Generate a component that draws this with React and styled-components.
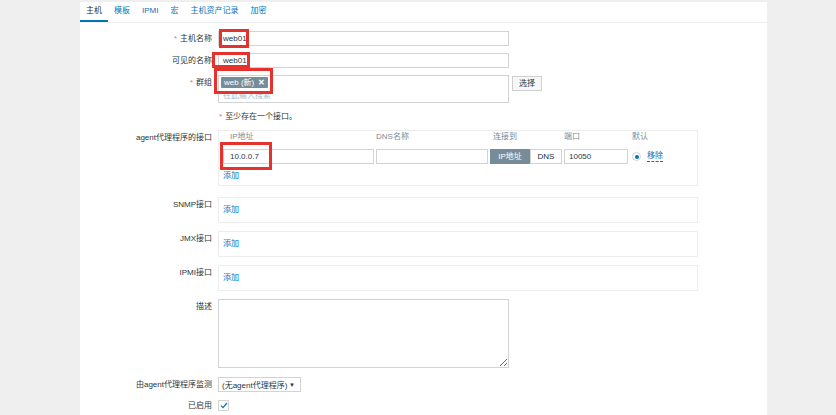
import React from 'react';
import styled, { createGlobalStyle } from 'styled-components';

const GlobalStyle = createGlobalStyle`
  body {
    margin: 0;
    background: #efefef;
    font-family: "Liberation Sans", "Noto Sans CJK SC", Arial, sans-serif;
    font-size: 8px;
    color: #2a363c;
  }
`;

const Page = styled.div`
  width: 836px;
  height: 415px;
  padding-top: 2px;
  box-sizing: border-box;
  overflow: hidden;
`;

const Panel = styled.div`
  margin-left: 80px;
  width: 687px;
  height: 413px;
  background: #fff;
`;

const TabBar = styled.div`
  display: flex;
  height: 20px;
  border-bottom: 1px solid #ebeef0;
`;

const Tab = styled.div`
  padding: 0 6px;
  line-height: 18px;
  border-bottom: 2px solid ${p => (p.$active ? '#0275b8' : 'transparent')};
  color: ${p => (p.$active ? '#1f2c33' : '#0275b8')};
`;

const Form = styled.div`
  display: flex;
  flex-direction: column;
`;

const Row = styled.div`
  display: grid;
  grid-template-columns: 132px auto;
  column-gap: 6px;
  align-items: ${p => (p.$center ? 'center' : 'start')};
  margin-top: ${p => p.$mt}px;
`;

const Label = styled.div`
  text-align: right;
  line-height: ${p => (p.$lh ? p.$lh : 15)}px;
  white-space: nowrap;
`;

const Star = styled.span`
  color: #e47070;
  margin-right: 3px;
`;

const Field = styled.div`
  display: flex;
  align-items: flex-start;
  gap: 3px;
`;

const Input = styled.div`
  position: relative;
  box-sizing: border-box;
  width: ${p => p.$w}px;
  height: 15px;
  border: 1px solid #d3d3d3;
  padding-left: ${p => (p.$pl != null ? p.$pl : 4)}px;
  line-height: 13px;
  background: #fff;
  white-space: nowrap;
`;

const Mark = styled.div`
  position: absolute;
  box-sizing: border-box;
  border: 3px solid #e5322d;
  left: ${p => p.$l}px;
  top: ${p => p.$t}px;
  width: ${p => p.$w}px;
  height: ${p => p.$h}px;
  pointer-events: none;
  z-index: 2;
`;

const MultiSelect = styled.div`
  position: relative;
  box-sizing: border-box;
  width: 291px;
  height: 28px;
  border: 1px solid #d3d3d3;
  padding: 1px 2px;
`;

const TagChip = styled.span`
  display: inline-flex;
  align-items: center;
  gap: 4px;
  height: 11px;
  padding: 0 3px;
  background: #768d99;
  color: #fff;
  border-radius: 1px;
  line-height: 11px;
`;

const TagX = styled.span`
  font-weight: bold;
  font-size: 8px;
`;

const Placeholder = styled.div`
  color: #acbbc2;
  line-height: 11px;
  margin-top: 2px;
  padding-left: 2px;
`;

const Button = styled.div`
  box-sizing: border-box;
  height: 15px;
  padding: 0 6px;
  border: 1px solid #cfcfcf;
  background: #f7f7f7;
  line-height: 13px;
  margin-top: 1px;
`;

const Note = styled.div`
  line-height: 11px;
  padding-left: 1px;
`;

const IfaceBox = styled.div`
  box-sizing: border-box;
  width: 480px;
  border: 1px solid #ededed;
  padding: ${p => (p.$empty ? '0 4px' : '1px 4px 4px')};
  height: ${p => (p.$empty ? '26px' : 'auto')};
  display: flex;
  flex-direction: column;
  justify-content: center;
`;

const IfaceGrid = styled.div`
  display: grid;
  grid-template-columns: 151px 112px 72px 64px auto;
  column-gap: 2px;
  row-gap: 7px;
  align-items: center;
`;

const ColHead = styled.div`
  line-height: 10px;
  color: #768d99;
  padding-left: ${p => p.$pl || 0}px;
`;

const Toggle = styled.div`
  display: flex;
  height: 15px;
`;

const ToggleBtn = styled.div`
  box-sizing: border-box;
  width: ${p => p.$w}px;
  height: 15px;
  line-height: 13px;
  text-align: center;
  border: 1px solid ${p => (p.$on ? '#768d99' : '#d3d3d3')};
  background: ${p => (p.$on ? '#768d99' : '#fff')};
  color: ${p => (p.$on ? '#fff' : '#1f2c33')};
`;

const DefaultCell = styled.div`
  display: flex;
  align-items: center;
  gap: 6px;
  padding-left: 2px;
`;

const Radio = styled.span`
  box-sizing: border-box;
  width: 9px;
  height: 9px;
  border-radius: 50%;
  border: 1px solid #d3d3d3;
  display: flex;
  align-items: center;
  justify-content: center;
  &::after {
    content: '';
    width: 4px;
    height: 4px;
    border-radius: 50%;
    background: #0275b8;
  }
`;

const Link = styled.span`
  color: #0275b8;
  line-height: 10px;
  border-bottom: ${p => (p.$dashed ? '1px dashed #0275b8' : 'none')};
`;

const AddLine = styled.div`
  line-height: 10px;
  margin-top: ${p => p.$mt || 0}px;
`;

const TextArea = styled.textarea`
  box-sizing: border-box;
  width: 291px;
  height: 69px;
  border: 1px solid #d3d3d3;
  margin: 0;
  padding: 2px;
  font: inherit;
`;

const Select = styled.div`
  box-sizing: border-box;
  width: 83px;
  height: 15px;
  border: 1px solid #d3d3d3;
  padding: 0 5px 0 3px;
  display: flex;
  justify-content: space-between;
  align-items: center;
  white-space: nowrap;
`;

const Arrow = styled.span`
  font-size: 6px;
`;

const Check = styled.div`
  box-sizing: border-box;
  width: 11px;
  height: 11px;
  border: 1px solid #d3d3d3;
  display: flex;
  align-items: center;
  justify-content: center;
`;

const tabs = ['主机', '模板', 'IPMI', '宏', '主机资产记录', '加密'];

const EmptyInterface = ({ label, mt }) => (
  <Row $mt={mt}>
    <Label>{label}</Label>
    <IfaceBox $empty>
      <AddLine>
        <Link>添加</Link>
      </AddLine>
    </IfaceBox>
  </Row>
);

export default function App() {
  return (
    <Page>
      <GlobalStyle />
      <Panel>
        <TabBar>
          {tabs.map((t, i) => (
            <Tab key={t} $active={i === 0}>{t}</Tab>
          ))}
        </TabBar>
        <Form>
          <Row $mt={8}>
            <Label><Star>*</Star>主机名称</Label>
            <Input $w={291} $pl={4}>
              web01
              <Mark $l={0} $t={-3} $w={30} $h={19} />
            </Input>
          </Row>
          <Row $mt={7}>
            <Label>可见的名称</Label>
            <Input $w={291} $pl={4}>
              web01
              <Mark $l={-7} $t={-2} $w={38} $h={16} />
            </Input>
          </Row>
          <Row $mt={7}>
            <Label><Star>*</Star>群组</Label>
            <Field>
              <MultiSelect>
                <TagChip>web (新) <TagX>✕</TagX></TagChip>
                <Placeholder>在此输入搜索</Placeholder>
                <Mark $l={-5} $t={-8} $w={59} $h={26} />
              </MultiSelect>
              <Button>选择</Button>
            </Field>
          </Row>
          <Row $mt={8}>
            <div />
            <Note><Star>*</Star>至少存在一个接口。</Note>
          </Row>
          <Row $mt={8}>
            <Label>agent代理程序的接口</Label>
            <IfaceBox>
              <IfaceGrid>
                <ColHead $pl={7}>IP地址</ColHead>
                <ColHead>DNS名称</ColHead>
                <ColHead $pl={3}>连接到</ColHead>
                <ColHead>端口</ColHead>
                <ColHead $pl={2}>默认</ColHead>
                <Input $w={151} $pl={6}>
                  10.0.0.7
                  <Mark $l={-4} $t={-8} $w={52} $h={28} />
                </Input>
                <Input $w={112} />
                <Toggle>
                  <ToggleBtn $on $w={40}>IP地址</ToggleBtn>
                  <ToggleBtn $w={32}>DNS</ToggleBtn>
                </Toggle>
                <Input $w={64}>10050</Input>
                <DefaultCell>
                  <Radio />
                  <Link $dashed>移除</Link>
                </DefaultCell>
              </IfaceGrid>
              <AddLine $mt={7}>
                <Link>添加</Link>
              </AddLine>
            </IfaceBox>
          </Row>
          <EmptyInterface label="SNMP接口" mt={11} />
          <EmptyInterface label="JMX接口" mt={8} />
          <EmptyInterface label="IPMI接口" mt={8} />
          <Row $mt={8}>
            <Label>描述</Label>
            <div>
              <TextArea readOnly defaultValue="" />
            </div>
          </Row>
          <Row $mt={7}>
            <Label>由agent代理程序监测</Label>
            <Select>
              <span>(无agent代理程序)</span>
              <Arrow>▼</Arrow>
            </Select>
          </Row>
          <Row $mt={8} $center>
            <Label $lh={11}>已启用</Label>
            <Check>
              <svg width="8" height="7" viewBox="0 0 8 7">
                <path d="M1 3.6 L3 5.6 L7 1" fill="none" stroke="#0275b8" strokeWidth="1.3" />
              </svg>
            </Check>
          </Row>
        </Form>
      </Panel>
    </Page>
  );
}
